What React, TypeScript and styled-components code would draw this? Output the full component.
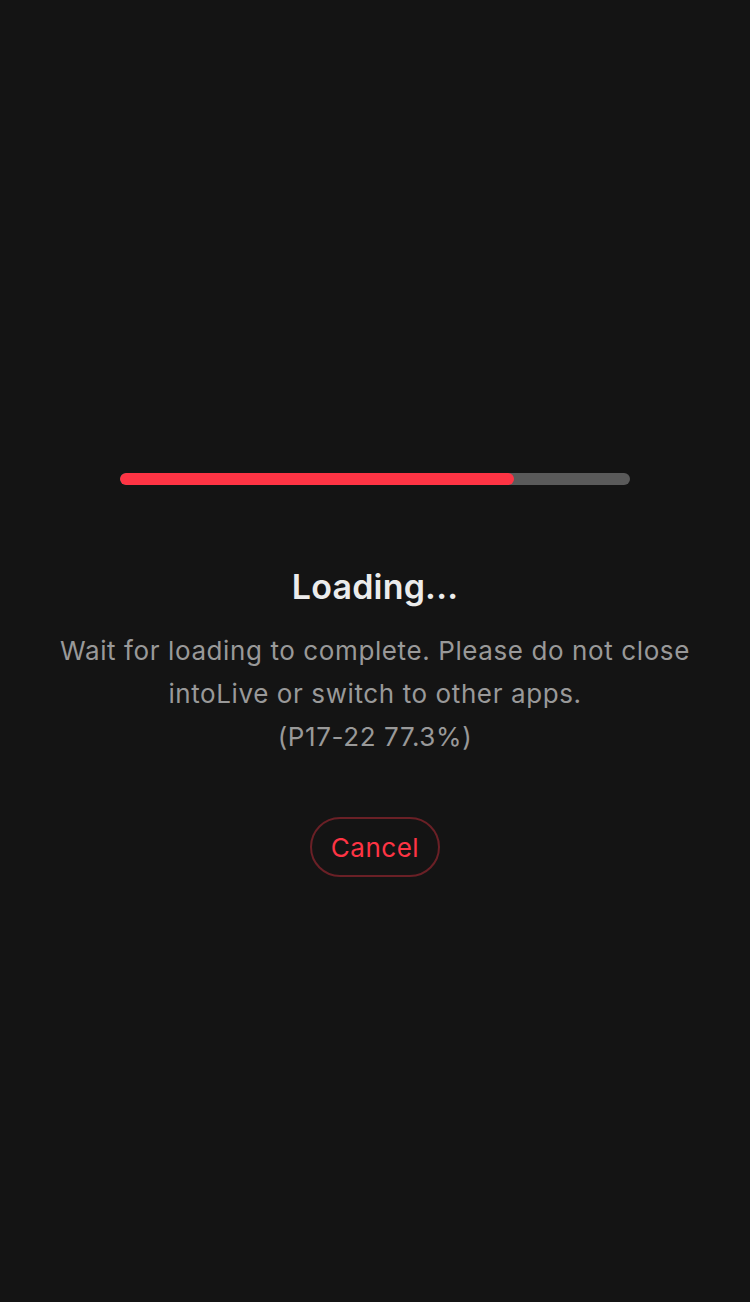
import styled, { createGlobalStyle } from "styled-components";

const GlobalStyle = createGlobalStyle`
  html, body {
    margin: 0;
    padding: 0;
    background-color: #141414;
  }
  body {
    font-family: Inter, "Noto Sans", sans-serif;
  }
`

const Screen = styled.div`
  min-height: 1302px;
  display: flex;
  flex-direction: column;
  align-items: center;
  padding-top: 473px;
  box-sizing: border-box;
  background-color: #141414;
`

const Track = styled.div`
  width: 510px;
  height: 12px;
  border-radius: 6px;
  background-color: #5a5a5a;
  overflow: hidden;
`

const Fill = styled.div`
  height: 100%;
  border-radius: 6px;
  background-color: #fe3444;
`

const Title = styled.h1`
  margin: 82px 0 0;
  font-size: 34px;
  font-weight: 600;
  line-height: 40px;
  letter-spacing: 0.2px;
  color: #ececec;
`

const Message = styled.p`
  margin: 22px 0 0;
  width: 720px;
  text-align: center;
  font-size: 26px;
  line-height: 43px;
  letter-spacing: 0.6px;
  color: #999999;
`

const CancelButton = styled.button`
  margin-top: 59px;
  width: 130px;
  height: 60px;
  border: 2px solid #6a2026;
  border-radius: 30px;
  background-color: transparent;
  color: #fe3444;
  font-family: inherit;
  font-size: 26px;
  letter-spacing: 0.5px;
  cursor: pointer;
`

const App = () => {
  const progress = 77.3

  return (
    <>
      <GlobalStyle />
      <Screen>
        <Track>
          <Fill style={{ width: `${progress}%` }} />
        </Track>
        <Title>Loading...</Title>
        <Message>
          Wait for loading to complete. Please do not close
          <br />
          intoLive or switch to other apps.
          <br />
          (P17-22 {progress}%)
        </Message>
        <CancelButton>Cancel</CancelButton>
      </Screen>
    </>
  );
}

export default App;
